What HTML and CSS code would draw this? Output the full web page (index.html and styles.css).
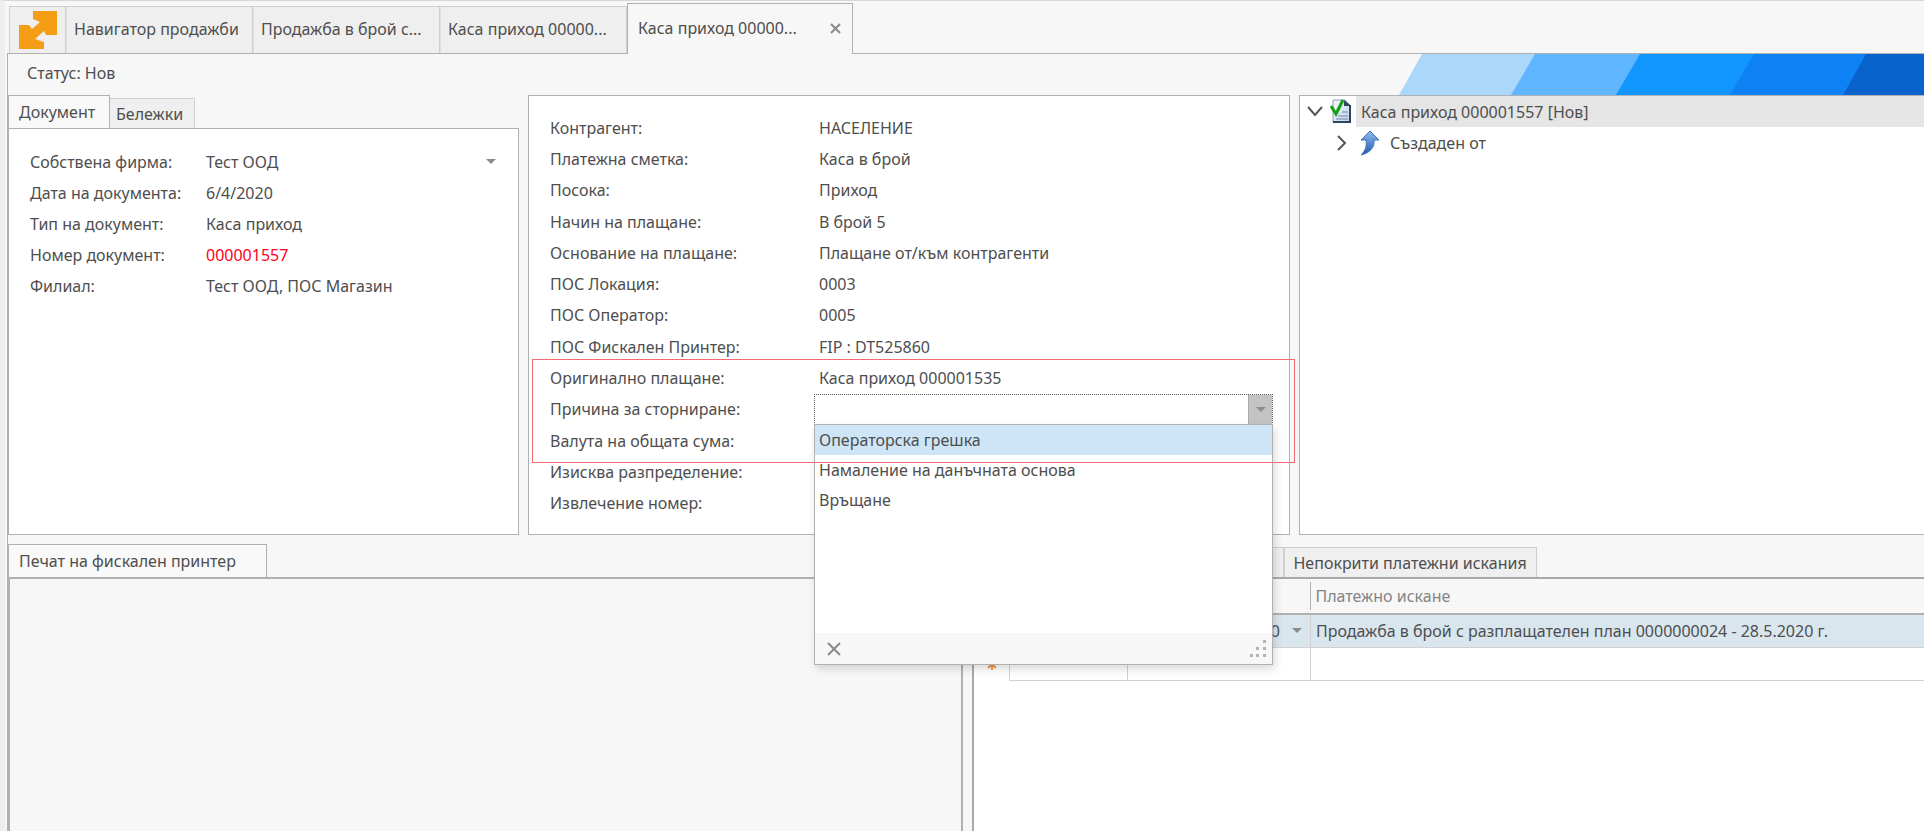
FILE: index.html
```html
<!DOCTYPE html>
<html lang="bg">
<head>
<meta charset="utf-8">
<title>Каса приход</title>
<link rel="stylesheet" href="styles.css">
</head>
<body>
<div class="app">
  <nav class="tabs">
    <button class="tab tab-logo" aria-label="Меню">
      <svg width="38" height="38" viewBox="0 0 38 38"><path fill="#f59d14" d="M14 0h24v24H27l-2-4-9 8 9 3v7H0V14h10l3 4 8-7-7-3z"/></svg>
    </button>
    <button class="tab">Навигатор продажби</button>
    <button class="tab">Продажба в брой с...</button>
    <button class="tab">Каса приход 00000...</button>
    <div class="tab tab-active"><span>Каса приход 00000...</span>
      <button class="close" aria-label="Затвори"><svg width="11" height="11" viewBox="0 0 11 11"><path d="M1 1l9 9M10 1l-9 9" stroke="#8a8a8a" stroke-width="2"/></svg></button>
    </div>
  </nav>

  <main class="page">
    <header class="status">
      <span>Статус: Нов</span>
      <svg class="banner" width="526" height="41" viewBox="0 0 526 41">
        <path fill="#abd7fa" d="M24 0h120L120 41H1z"/>
        <path fill="#5fb6ff" d="M137 0h110L223 41H113z"/>
        <path fill="#1195ff" d="M242 0h120L338 41H218z"/>
        <path fill="#0e82f4" d="M356 0h120L452 41H332z"/>
        <path fill="#0963cd" d="M468 0h58v41h-81z"/>
      </svg>
    </header>

    <section class="top">
      <div class="doc">
        <div class="subtabs"><button class="subtab subtab-on">Документ</button><button class="subtab subtab-notes">Бележки</button></div>
        <dl class="doc-body">
          <dt>Собствена фирма:</dt><dd class="with-arrow">Тест ООД<i class="arrow"></i></dd>
          <dt>Дата на документа:</dt><dd>6/4/2020</dd>
          <dt>Тип на документ:</dt><dd>Каса приход</dd>
          <dt>Номер документ:</dt><dd class="red">000001557</dd>
          <dt>Филиал:</dt><dd>Тест ООД, ПОС Магазин</dd>
        </dl>
      </div>

      <div class="payment">
        <dl class="fields">
          <dt>Контрагент:</dt><dd>НАСЕЛЕНИЕ</dd>
          <dt>Платежна сметка:</dt><dd>Каса в брой</dd>
          <dt>Посока:</dt><dd>Приход</dd>
          <dt>Начин на плащане:</dt><dd>В брой 5</dd>
          <dt>Основание на плащане:</dt><dd>Плащане от/към контрагенти</dd>
          <dt>ПОС Локация:</dt><dd>0003</dd>
          <dt>ПОС Оператор:</dt><dd>0005</dd>
          <dt>ПОС Фискален Принтер:</dt><dd>FIP : DT525860</dd>
          <dt>Оригинално плащане:</dt><dd>Каса приход 000001535</dd>
          <dt><label for="reason">Причина за сторниране:</label></dt>
          <dd class="combo">
            <input id="reason" class="combo-input" type="text" role="combobox" aria-expanded="true" aria-controls="reasons">
            <button class="combo-btn" aria-label="Отвори"><i class="arrow"></i></button>
            <div class="popup">
              <ul class="options" id="reasons" role="listbox">
                <li class="option option-on" role="option">Операторска грешка</li>
                <li class="option" role="option">Намаление на данъчната основа</li>
                <li class="option" role="option">Връщане</li>
              </ul>
              <div class="popup-foot">
                <button class="close" aria-label="Изчисти"><svg width="14" height="14" viewBox="0 0 14 14"><path d="M1 1l12 12M13 1L1 13" stroke="#8a8a8a" stroke-width="2"/></svg></button>
                <svg width="16" height="17" viewBox="0 0 16 17" fill="#b4b4b4"><path d="M13 0h3v3h-3zM13 7h3v3h-3zM13 14h3v3h-3zM6 7h3v3H6zM6 14h3v3H6zM0 14h3v3H0z"/></svg>
              </div>
            </div>
          </dd>
          <dt>Валута на общата сума:</dt><dd></dd>
          <dt>Изисква разпределение:</dt><dd></dd>
          <dt>Извлечение номер:</dt><dd></dd>
        </dl>
        <div class="marker"></div>
      </div>

      <div class="tree">
        <div class="node">
          <svg class="twist" width="16" height="11" viewBox="0 0 16 11"><path d="M1 1l7 8 7-8" fill="none" stroke="#555" stroke-width="2"/></svg>
          <svg width="22" height="25" viewBox="0 0 22 25">
            <defs><linearGradient id="sheet" x1="0" y1="0" x2="1" y2="1"><stop offset="0" stop-color="#f4f8fc"/><stop offset="1" stop-color="#c3d2e4"/></linearGradient></defs>
            <path d="M3 1h12l5 5v17H3z" fill="url(#sheet)" stroke="#8ba0bb" stroke-width="1"/>
            <path d="M20 6v17H3" fill="none" stroke="#2c4463" stroke-width="2"/>
            <path d="M14 1v6h7z" fill="#2c4463"/>
            <path d="M12 13h6M8 17h10M6 20h12" stroke="#7189a8" stroke-width="1"/>
            <path d="M1 7l5 8L13 1" fill="none" stroke="#12a012" stroke-width="3"/>
          </svg>
          <span class="node-text node-on">Каса приход 000001557 [Нов]</span>
        </div>
        <div class="node node-child">
          <svg class="twist" width="10" height="16" viewBox="0 0 10 16"><path d="M1 1l7 7-7 7" fill="none" stroke="#555" stroke-width="2"/></svg>
          <svg width="20" height="26" viewBox="0 0 20 26">
            <defs><linearGradient id="up" x1="0" y1="0" x2="0" y2="1"><stop offset="0" stop-color="#8ec0ee"/><stop offset="1" stop-color="#2255ae"/></linearGradient></defs>
            <path d="M10 1l9 9h-5c1 7-4 13-13 15 4-4 6-8 5-15H1z" fill="url(#up)" stroke="#3f74bd" stroke-width="1"/>
          </svg>
          <span class="node-text">Създаден от</span>
        </div>
      </div>
    </section>

    <section class="bottom">
      <div class="printer">
        <div class="subtabs"><button class="subtab subtab-on">Печат на фискален принтер</button></div>
        <div class="printer-body"></div>
      </div>
      <div class="claims">
        <div class="subtabs"><button class="subtab subtab-hidden" aria-label="Покрити платежни искания"></button><button class="subtab subtab-clip"><span>Непокрити платежни искания</span></button></div>
        <div class="claims-body">
          <table class="grid">
            <colgroup><col class="c-mark"><col class="c-one"><col class="c-two"><col></colgroup>
            <thead><tr><th></th><th></th><th></th><th class="sep"><span>Платежно искане</span></th></tr></thead>
            <tbody>
              <tr class="row-on"><td></td><td></td><td><div class="amount">0<i class="arrow"></i></div></td><td>Продажба в брой с разплащателен план 0000000024 - 28.5.2020 г.</td></tr>
              <tr><td class="mark"><svg width="12" height="12" viewBox="0 0 12 12"><path d="M6 0v12M0 6h12M2 2l8 8M10 2l-8 8" stroke="#f09a45" stroke-width="2"/></svg></td><td></td><td></td><td></td></tr>
            </tbody>
          </table>
        </div>
      </div>
    </section>
  </main>
</div>
</body>
</html>
```
FILE: styles.css
```css
* { box-sizing: border-box; }
html, body { height: 100%; }
body {
  margin: 0;
  background: #f7f7f7;
  color: #4e4e4e;
  font: 16px/20px "Noto Sans", "Open Sans", sans-serif;
  overflow: hidden;
}
button, input { font: inherit; color: inherit; padding: 0; border: 0; background: none; }
dl, dd, ul { margin: 0; padding: 0; }

.app {
  display: flex;
  flex-direction: column;
  height: 100%;
  border-left: 5px solid #eeeeee;
  border-top: 1px solid #d8d8d8;
  padding-left: 2px;
}

/* Document tabs */
.tabs { display: flex; align-items: flex-end; height: 53px; flex: none; padding-left: 2px; border-bottom: 1px solid #b1b1b1; }
.tab {
  width: 187px;
  height: 47px;
  padding: 0 0 2px 7px;
  background: #efefef;
  border: 1px solid #cfcfcf;
  border-width: 1px 1px 0 1px;
  text-align: left;
  white-space: nowrap;
}
.tab + .tab { border-left-color: #dedede; }
.tab-logo { width: 57px; padding: 0 0 0 9px; }
.tab-logo svg { display: block; }
.tab-active, .tab + .tab-active {
  display: flex;
  align-items: center;
  justify-content: space-between;
  width: 226px;
  height: 51px;
  margin-bottom: -1px;
  padding: 0 11px 2px 10px;
  background: #f7f7f7;
  border-color: #b1b1b1;
}
.close { display: flex; }

/* Page frame */
.page { flex: 1; min-height: 0; display: flex; flex-direction: column; border-left: 1px solid #b1b1b1; }
.status { display: flex; justify-content: space-between; height: 41px; flex: none; padding-left: 19px; }
.status span { padding-top: 9px; }

.arrow { width: 0; height: 0; border: 5px solid transparent; border-top-color: #8c8c8c; border-bottom: 0; }

/* Sub tabs */
.subtabs { display: flex; align-items: flex-end; height: 33px; flex: none; position: relative; z-index: 1; }
.subtab { height: 30px; padding: 0 6px; background: #efefef; border: 1px solid #cfcfcf; border-left: 0; border-bottom: 0; white-space: nowrap; text-align: left; }
.subtab-on { width: 102px; height: 33px; padding: 0 0 0 10px; background: #f9f9f9; border: 1px solid #b1b1b1; border-bottom: 0; }
.subtab-notes { width: 85px; }

/* Upper panels */
.top { display: grid; grid-template-columns: 511fr 762fr 625fr; gap: 9px; height: 440px; flex: none; }
.doc { display: flex; flex-direction: column; }
.doc-body {
  flex: 1;
  display: grid;
  grid-template-columns: 176px 1fr;
  grid-auto-rows: 31px;
  align-content: start;
  align-items: center;
  padding: 17px 22px 0 21px;
  background: #fff;
  border: 1px solid #b1b1b1;
}
.with-arrow { display: flex; justify-content: space-between; align-items: center; }
.red { color: #ff0022; }

.payment { position: relative; display: flex; background: #fff; border: 1px solid #b1b1b1; }
.fields {
  flex: 1;
  display: grid;
  grid-template-columns: 269px 1fr;
  grid-auto-rows: 1fr;
  align-items: center;
  padding: 16px 16px 15px 21px;
}
.combo { position: relative; display: flex; align-self: stretch; margin-left: -5px; border: 1px dotted #555; }
.combo-input { flex: 1; min-width: 0; padding: 0 4px; outline: 0; }
.combo-btn { display: flex; align-items: center; justify-content: center; width: 24px; background: #c3c3c3; border-left: 1px solid #aaa; }
.popup {
  position: absolute;
  z-index: 2;
  top: 100%;
  left: -1px;
  right: -1px;
  background: #fff;
  border: 1px solid #b1b1b1;
  box-shadow: 2px 4px 8px rgba(0, 0, 0, .15);
}
.options { list-style: none; height: 208px; }
.option { height: 30px; padding: 5px 4px; }
.option-on { background: #cde5f7; }
.popup-foot { display: flex; justify-content: space-between; align-items: center; height: 31px; padding: 0 6px 0 12px; background: #f7f7f7; }
.marker { position: absolute; z-index: 3; top: 263px; left: 3px; right: -6px; height: 104px; border: 1px solid #f26b70; }

.tree { background: #fff; border: 1px solid #b1b1b1; border-right: 0; }
.node { display: flex; align-items: center; gap: 7px; height: 31px; padding-left: 7px; }
.node-child { padding-left: 37px; gap: 13px; }
.node-text { flex: 1; }
.node-child .node-text { margin-left: -3px; }
.node-on { background: #e5e5e5; align-self: stretch; padding: 6px 5px; margin-left: -3px; }

/* Lower panels */
.bottom { flex: 1; min-height: 0; display: grid; grid-template-columns: 956fr 952fr; gap: 9px; padding-top: 9px; }
.printer, .claims { display: flex; flex-direction: column; min-width: 0; }
.printer .subtab-on { width: 259px; }
.printer-body { flex: 1; border: 2px solid #b1b1b1; border-bottom: 0; }
.claims-body { flex: 1; background: #fff; border: 2px solid #a9a9a9; border-width: 2px 0 0 2px; }
.subtab-hidden { width: 312px; }
.subtab-clip { width: 253px; padding: 0 8px; border-left: 1px solid #cfcfcf; }
.subtab-clip span { display: block; overflow: hidden; }

.grid { width: 100%; border-collapse: collapse; table-layout: fixed; }
.c-mark { width: 35px; }
.c-one { width: 118px; }
.c-two { width: 183px; }
.grid th { height: 35px; padding: 2px 0; background: #f7f7f7; border-bottom: 2px solid #b1b1b1; color: #848484; font-weight: 400; text-align: left; }
.sep span { display: block; padding: 4px; border-left: 1px solid #b1b1b1; }
.grid td { height: 33px; padding: 0 5px; border: 1px solid #d2d2d2; border-right: 0; }
.grid td:first-child { border-left: 0; border-bottom: 0; }
.row-on td { background: #d9e6ee; }
.grid .row-on td:first-child { background: #fff; }
.amount { display: flex; justify-content: flex-end; align-items: center; gap: 12px; padding-right: 3px; }
.mark svg { display: block; margin: 0 auto; }
```
